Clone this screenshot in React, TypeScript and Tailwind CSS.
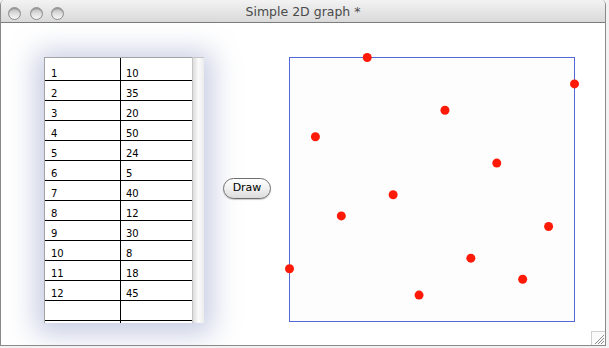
import React from 'react';

const DATA: [number, number][] = [
  [1, 10], [2, 35], [3, 20], [4, 50], [5, 24], [6, 5],
  [7, 40], [8, 12], [9, 30], [10, 8], [11, 18], [12, 45],
];

const PLOT_W = 285;
const PLOT_H = 264;

function TrafficLight() {
  return (
    <div className="w-[13px] h-[13px] rounded-full border border-[#8e8e8e] bg-gradient-to-b from-[#b9b9b9] via-[#dedede] to-[#f7f7f7] shadow-[inset_0_1px_1px_rgba(0,0,0,0.25)]" />
  );
}

function DataTable() {
  const rows: ([number, number] | null)[] = [...DATA, null];
  return (
    <div className="flex w-[160px] h-[266px] shadow-[0_3px_26px_8px_rgba(120,130,185,0.42)] bg-white">
      <div className="w-[148px] h-full overflow-hidden border-l border-t border-[#a3a3a3]">
        {rows.map((r, i) => (
          <div
            key={i}
            className={`flex border-b border-black ${i === 0 ? 'h-[23px]' : 'h-[20px]'}`}
          >
            <div className="w-[76px] flex items-end pl-[6px] border-r border-black leading-[12px]">
              {r ? r[0] : ''}
            </div>
            <div className="flex-1 flex items-end pl-[5px] leading-[12px]">
              {r ? r[1] : ''}
            </div>
          </div>
        ))}
        <div className="flex h-[10px]">
          <div className="w-[76px] border-r border-black" />
        </div>
      </div>
      <div className="w-[12px] h-full border-l border-t border-[#c4c4c4] bg-gradient-to-r from-[#dcdcdc] via-[#fbfbfb] to-[#ececec]" />
    </div>
  );
}

function Plot() {
  return (
    <svg width={PLOT_W + 1} height={PLOT_H + 1} className="overflow-visible">
      <rect
        x={0.5}
        y={0.5}
        width={PLOT_W}
        height={PLOT_H}
        fill="#fdfdfd"
        stroke="#5468dc"
        strokeWidth={1}
      />
      {DATA.map(([x, y]) => (
        <circle
          key={x}
          cx={0.5 + ((x - 1) * PLOT_W) / 11}
          cy={0.5 + PLOT_H - (y * PLOT_H) / 50}
          r={4.5}
          fill="#ff1a08"
        />
      ))}
    </svg>
  );
}

export default function App() {
  return (
    <div
      className="w-[609px] h-[348px] bg-[#f2f2f2] overflow-hidden"
      style={{ fontFamily: '"DejaVu Sans", "Liberation Sans", sans-serif' }}
    >
      <div className="w-[606px] h-[346px] flex flex-col rounded-t-[5px] overflow-hidden border-x border-b border-[#8a8a8a] bg-white">
        {/* title bar */}
        <div className="relative h-[23px] flex items-center border-b border-[#7c7c7c] bg-gradient-to-b from-[#f3f3f3] via-[#e6e6e6] to-[#d9d9d9]">
          <div className="flex gap-[8.5px] pl-[7px] pt-[4px]">
            <TrafficLight />
            <TrafficLight />
            <TrafficLight />
          </div>
          <div className="absolute inset-x-0 top-[3px] text-center text-[12.5px] text-[#4a4a4a]">
            Simple 2D graph *
          </div>
        </div>

        {/* content */}
        <div className="relative flex-1 flex items-start pt-[34px] pl-[43px] text-[10px] text-black">
          <DataTable />
          <div className="ml-[19px] mt-[121px] w-[48px] h-[21px] rounded-full border border-[#6e6e6e] bg-gradient-to-b from-white via-[#f0f0f0] to-[#dcdcdc] shadow-[0_1px_1px_rgba(0,0,0,0.2)] flex items-center justify-center text-[11px] text-black">
            Draw
          </div>
          <div className="ml-[18px]">
            <Plot />
          </div>

          {/* resize grip */}
          <svg width="14" height="14" className="absolute right-0 bottom-0">
            <rect x="0.5" y="0.5" width="14" height="14" fill="#fafafa" stroke="#d0d0d0" />
            <line x1="4" y1="13" x2="13" y2="4" stroke="#8a8a8a" />
            <line x1="7" y1="13" x2="13" y2="7" stroke="#8a8a8a" />
            <line x1="10" y1="13" x2="13" y2="10" stroke="#8a8a8a" />
          </svg>
        </div>
      </div>
    </div>
  );
}
